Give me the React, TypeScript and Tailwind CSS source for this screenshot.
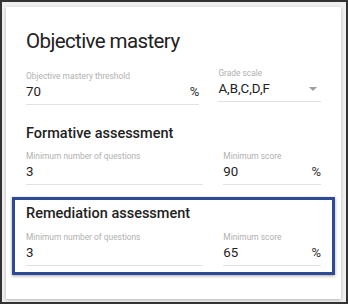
import React from 'react'

function Field({ label, value, suffix, dropdown, className }: { label: string; value: string; suffix?: string; dropdown?: boolean; className?: string }) {
  return (
    <div className={`flex flex-col ${className ?? ''}`}>
      <span className="text-[8.4px] leading-[12px] text-[#b0b0b0]">{label}</span>
      <div className="flex items-start justify-between h-[23px] pt-[2px] border-b border-[#e2e2e2]">
        <span className="text-[13.3px] leading-[16px] text-[#222]">{value}</span>
        {suffix && <span className="text-[13px] leading-[16px] text-[#333]">{suffix}</span>}
        {dropdown && (
          <svg width="8" height="4" viewBox="0 0 8 4" className="mr-[4px] mt-[6px]">
            <path d="M0 0h8L4 4z" fill="#9e9e9e" />
          </svg>
        )}
      </div>
    </div>
  )
}

export default function App() {
  return (
    <div className="w-[348px] h-[304px] bg-[#333] p-[2px] font-['Roboto',sans-serif]">
      <div className="w-full h-full bg-[#efefef] pt-[5px] pl-[4px] pr-[5px] pb-[3px]">
        <div className="h-[292px] bg-white shadow-[0_1px_3px_rgba(0,0,0,0.25)] px-[20px] pt-[21px]">
          <h1 className="text-[20.5px] leading-[26px] tracking-[-0.6px] text-[#222]">Objective mastery</h1>
          <div className="flex gap-[19px] mt-[16px]">
            <Field label="Objective mastery threshold" value="70" suffix="%" className="w-[174px]" />
            <Field label="Grade scale" value="A,B,C,D,F" dropdown className="w-[103px] -mt-[3px]" />
          </div>
          <h2 className="text-[14.5px] leading-[20px] font-medium text-[#222] mt-[19px]">Formative assessment</h2>
          <div className="flex gap-[20px] mt-[6px]">
            <Field label="Minimum number of questions" value="3" className="w-[178px]" />
            <Field label="Minimum score" value="90" suffix="%" className="w-[98px]" />
          </div>
          <div className="-mx-[14px] mt-[12px] border-[3px] border-[#2c4a96] shadow-[0_1px_3px_rgba(0,0,0,0.35)] px-[11px] pt-[4px] pb-[6px]">
            <h2 className="text-[14.5px] leading-[20px] font-medium text-[#222]">Remediation assessment</h2>
            <div className="flex gap-[20px] mt-[7px]">
              <Field label="Minimum number of questions" value="3" className="w-[178px]" />
              <Field label="Minimum score" value="65" suffix="%" className="w-[98px]" />
            </div>
          </div>
        </div>
      </div>
    </div>
  )
}
